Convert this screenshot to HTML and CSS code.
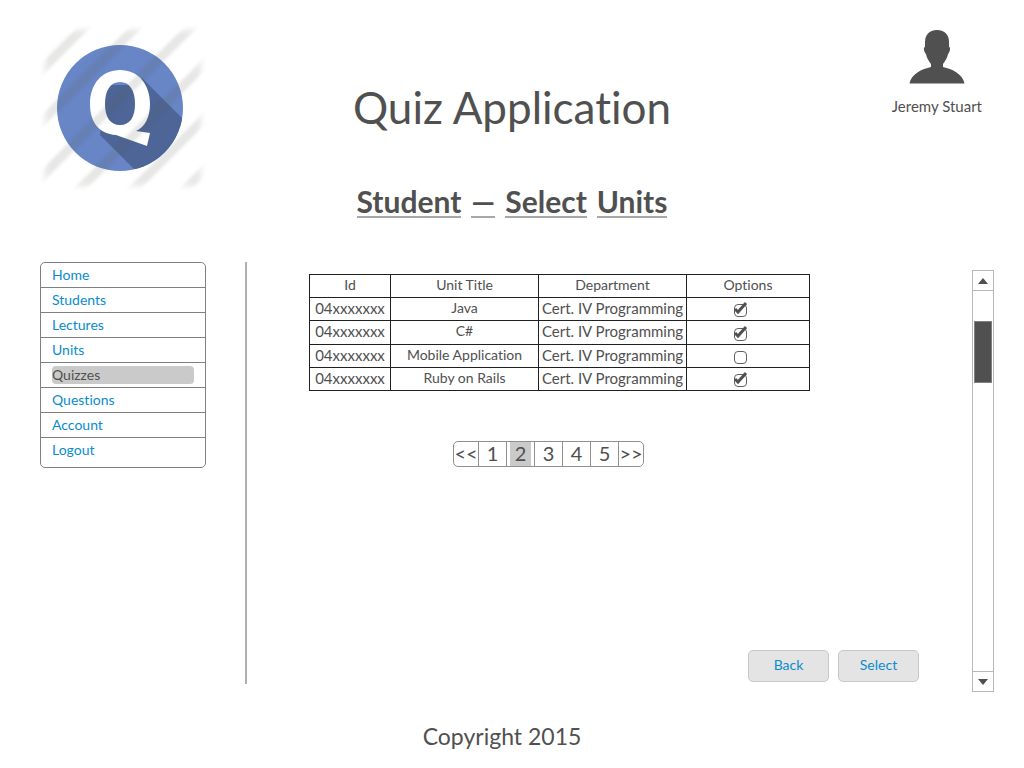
FILE: index.html
```html
<!DOCTYPE html>
<html lang="en">
<head>
<meta charset="utf-8">
<meta name="viewport" content="width=device-width, initial-scale=1">
<title>Quiz Application</title>
<link rel="stylesheet" href="styles.css">
</head>
<body>
<header class="header">
  <svg class="logo" viewBox="0 0 166 166" role="img" aria-label="Quiz logo">
    <defs>
      <clipPath id="disc"><circle cx="80" cy="83" r="63"/></clipPath>
      <filter id="soft" x="-10%" y="-10%" width="120%" height="120%"><feGaussianBlur stdDeviation="1.5"/></filter>
      <filter id="edge"><feGaussianBlur stdDeviation="0.6"/></filter>
      <filter id="fade"><feGaussianBlur stdDeviation="3"/></filter>
      <mask id="frame" maskUnits="userSpaceOnUse" x="0" y="0" width="166" height="166"><rect x="5" y="5" width="156" height="156" fill="#fff" filter="url(#fade)"/></mask>
    </defs>
    <g filter="url(#edge)">
      <circle cx="80" cy="83" r="63" fill="#6786c6"/>
      <path clip-path="url(#disc)" fill="#4d6697" d="M65 60H95L102 53L150 101V166H116L60 110Z"/>
      <path fill="#fff" fill-rule="evenodd" d="M80 45C98 45 110 59 110 79C110 92 105 102 96 106L110 108L107 121L76 110C59 109 50 97 50 79C50 59 62 45 80 45ZM80 57C70 57 65 66 65 79C65 92 70 100 80 100C90 100 95 92 95 79C95 66 90 57 80 57Z"/>
    </g>
    <g mask="url(#frame)">
      <path filter="url(#soft)" fill="none" stroke="#605a50" stroke-opacity=".15" stroke-width="9" d="M-4 50L50 -4M-4 102L102 -4M-4 157L157 -4M34 170L170 34M88 170L170 88M140 170L170 140"/>
    </g>
  </svg>
  <div class="titles">
    <h1 class="title">Quiz Application</h1>
    <h2 class="subtitle"><span>Student</span> <span>—</span> <span>Select</span> <span>Units</span></h2>
  </div>
  <div class="user">
    <svg class="avatar" viewBox="0 0 56 54" aria-hidden="true"><path fill="#505050" d="M28 0C36 0 40 5 40 12V17C42 17 41 22 39 24C38 29 36 31 34 34V37C43 39 54 44 55.500 53.500H.5C2 44 13 39 22 37V34C20 31 18 29 17 24C15 22 14 17 16 17V12C16 5 20 0 28 0Z"/></svg>
    <span class="user-name">Jeremy Stuart</span>
  </div>
</header>

<div class="main">
  <nav class="menu" aria-label="Main">
    <a href="#">Home</a>
    <a href="#">Students</a>
    <a href="#">Lectures</a>
    <a href="#">Units</a>
    <a href="#" class="current" aria-current="page"><span>Quizzes</span></a>
    <a href="#">Questions</a>
    <a href="#">Account</a>
    <a href="#">Logout</a>
  </nav>

  <main class="content">
    <table class="units">
      <colgroup><col class="col-id"><col class="col-title"><col class="col-dept"><col></colgroup>
      <thead>
        <tr><th scope="col">Id</th><th scope="col">Unit Title</th><th scope="col">Department</th><th scope="col">Options</th></tr>
      </thead>
      <tbody>
        <tr><td>04xxxxxxx</td><td>Java</td><td>Cert. IV Programming</td><td><span class="tick"><input type="checkbox" aria-label="Select Java" checked><svg viewBox="0 0 16 16" aria-hidden="true"><path d="M3 8L6 11L14 2"/></svg></span></td></tr>
        <tr><td>04xxxxxxx</td><td>C#</td><td>Cert. IV Programming</td><td><span class="tick"><input type="checkbox" aria-label="Select C#" checked><svg viewBox="0 0 16 16" aria-hidden="true"><path d="M3 8L6 11L14 2"/></svg></span></td></tr>
        <tr><td>04xxxxxxx</td><td>Mobile Application</td><td>Cert. IV Programming</td><td><span class="tick"><input type="checkbox" aria-label="Select Mobile Application"><svg viewBox="0 0 16 16" aria-hidden="true"><path d="M3 8L6 11L14 2"/></svg></span></td></tr>
        <tr><td>04xxxxxxx</td><td>Ruby on Rails</td><td>Cert. IV Programming</td><td><span class="tick"><input type="checkbox" aria-label="Select Ruby on Rails" checked><svg viewBox="0 0 16 16" aria-hidden="true"><path d="M3 8L6 11L14 2"/></svg></span></td></tr>
      </tbody>
    </table>

    <nav class="pager" aria-label="Pages">
      <a href="#">&lt;&lt;</a><a href="#">1</a><a href="#" class="on" aria-current="page"><span>2</span></a><a href="#">3</a><a href="#">4</a><a href="#">5</a><a href="#">&gt;&gt;</a>
    </nav>

    <div class="actions">
      <button type="button">Back</button>
      <button type="button">Select</button>
    </div>
  </main>

  <div class="scroll">
    <button type="button" aria-label="Scroll up"><svg viewBox="0 0 10 6"><path d="M5 0L10 6H0Z"/></svg></button>
    <div class="track"><div class="thumb"></div></div>
    <button type="button" aria-label="Scroll down"><svg viewBox="0 0 10 6"><path d="M0 0H10L5 6Z"/></svg></button>
  </div>
</div>

<footer class="footer">Copyright 2015</footer>
</body>
</html>
```

FILE: styles.css
```css
* { box-sizing: border-box; }

body {
  margin: 0;
  padding: 25px 30px 14px 40px;
  background: #fff;
  color: #505050;
  font-family: Lato, "Open Sans", sans-serif;
  font-size: 14px;
  font-variant-ligatures: none;
}

a { color: #0a8ccd; text-decoration: none; }

.header {
  display: grid;
  grid-template-columns: 166px 1fr 166px;
  padding-right: 10px;
}
.logo { display: block; width: 166px; height: 166px; }

.titles { padding-top: 56px; text-align: center; }
.title { margin: 0; font-size: 44px; line-height: 52px; font-weight: 400; }
.subtitle {
  display: flex;
  justify-content: center;
  gap: 10px;
  margin: 54px 0 0;
  font-size: 30px;
  line-height: 29px;
  font-weight: 700;
}
.subtitle span { border-bottom: 2px solid #a8a8a8; }

.user {
  justify-self: end;
  display: flex;
  flex-direction: column;
  align-items: center;
  gap: 12px;
  padding: 5px 2px 0 0;
}
.avatar { width: 56px; height: 54px; }
.user-name { font-size: 15px; line-height: 20px; }

.main {
  display: grid;
  grid-template-columns: 166px 1fr 22px;
  height: 430px;
  margin-top: 44px;
}

.menu {
  align-self: start;
  border: 1px solid #808080;
  border-radius: 5px;
  padding-bottom: 4px;
}
.menu a {
  display: block;
  height: 25px;
  padding: 0 11px;
  border-bottom: 1px solid #808080;
  line-height: 23px;
}
.menu a:last-child { border-bottom: 0; }
.menu .current { padding-top: 3px; color: #505050; }
.menu .current span {
  display: block;
  border-radius: 4px;
  background: #cacaca;
  line-height: 18px;
}

.content {
  display: flex;
  flex-direction: column;
  height: 422px;
  margin-left: 39px;
  padding: 12px 53px 2px 62px;
  border-left: 2px solid #b0b0b0;
}

.units {
  width: 82%;
  min-width: 501px;
  border-collapse: collapse;
  table-layout: fixed;
  text-align: center;
}
.col-id { width: 81px; }
.col-title, .col-dept { width: 148px; }
.units th, .units td {
  height: 23px;
  padding: 0;
  border: 1px solid #202020;
  font-weight: 400;
  line-height: 20px;
  white-space: nowrap;
  vertical-align: top;
}
.units tr:nth-child(2) td { height: 24px; }
.units td:first-child, .units td:nth-child(3) { font-size: 15px; }
.units td:last-child { padding-right: 16px; vertical-align: middle; }

.tick { display: grid; width: 16px; height: 16px; margin: 0 auto; }
.tick > * { grid-area: 1 / 1; }
.tick input {
  appearance: none;
  place-self: end center;
  width: 13px;
  height: 13px;
  margin: 0;
  border: 1px solid #606060;
  border-radius: 4px;
}
.tick svg {
  visibility: hidden;
  fill: none;
  stroke: #505050;
  stroke-width: 3;
  pointer-events: none;
}
.tick input:checked + svg { visibility: visible; }

.pager {
  display: flex;
  align-self: flex-start;
  margin: 50px 0 0 144px;
  border: 1px solid #909090;
  border-radius: 5px;
  overflow: hidden;
}
.pager a {
  width: 28px;
  height: 24px;
  border-left: 1px solid #909090;
  color: #505050;
  font-size: 20px;
  line-height: 22px;
  text-align: center;
}
.pager a:first-child { width: 24px; border-left: 0; }
.pager a:last-child { width: 25px; }
.pager .on { padding: 0 3px; }
.pager .on span { display: block; height: 100%; background: #cacaca; }

.actions { display: flex; justify-content: flex-end; gap: 9px; margin-top: auto; }
.actions button {
  width: 81px;
  height: 32px;
  padding: 0 0 4px;
  border: 1px solid #c8c8c8;
  border-radius: 5px;
  background: #e4e4e4;
  color: #0a8ccd;
  font-family: inherit;
  font-size: 14px;
}

.scroll {
  display: flex;
  flex-direction: column;
  margin-top: 8px;
  border: 1px solid #b8b8b8;
}
.scroll button {
  display: grid;
  place-items: center;
  height: 19px;
  padding: 0;
  border: 0;
  background: #fff;
}
.scroll svg { width: 10px; height: 6px; fill: #505050; }
.track {
  flex: 1;
  padding: 30px 1px 0;
  border: solid #b8b8b8;
  border-width: 1px 0;
}
.thumb { height: 62px; border: 1px solid #808080; background: #505050; }

.footer {
  margin-top: 28px;
  padding-right: 30px;
  font-size: 23px;
  line-height: 32px;
  text-align: center;
}
```
